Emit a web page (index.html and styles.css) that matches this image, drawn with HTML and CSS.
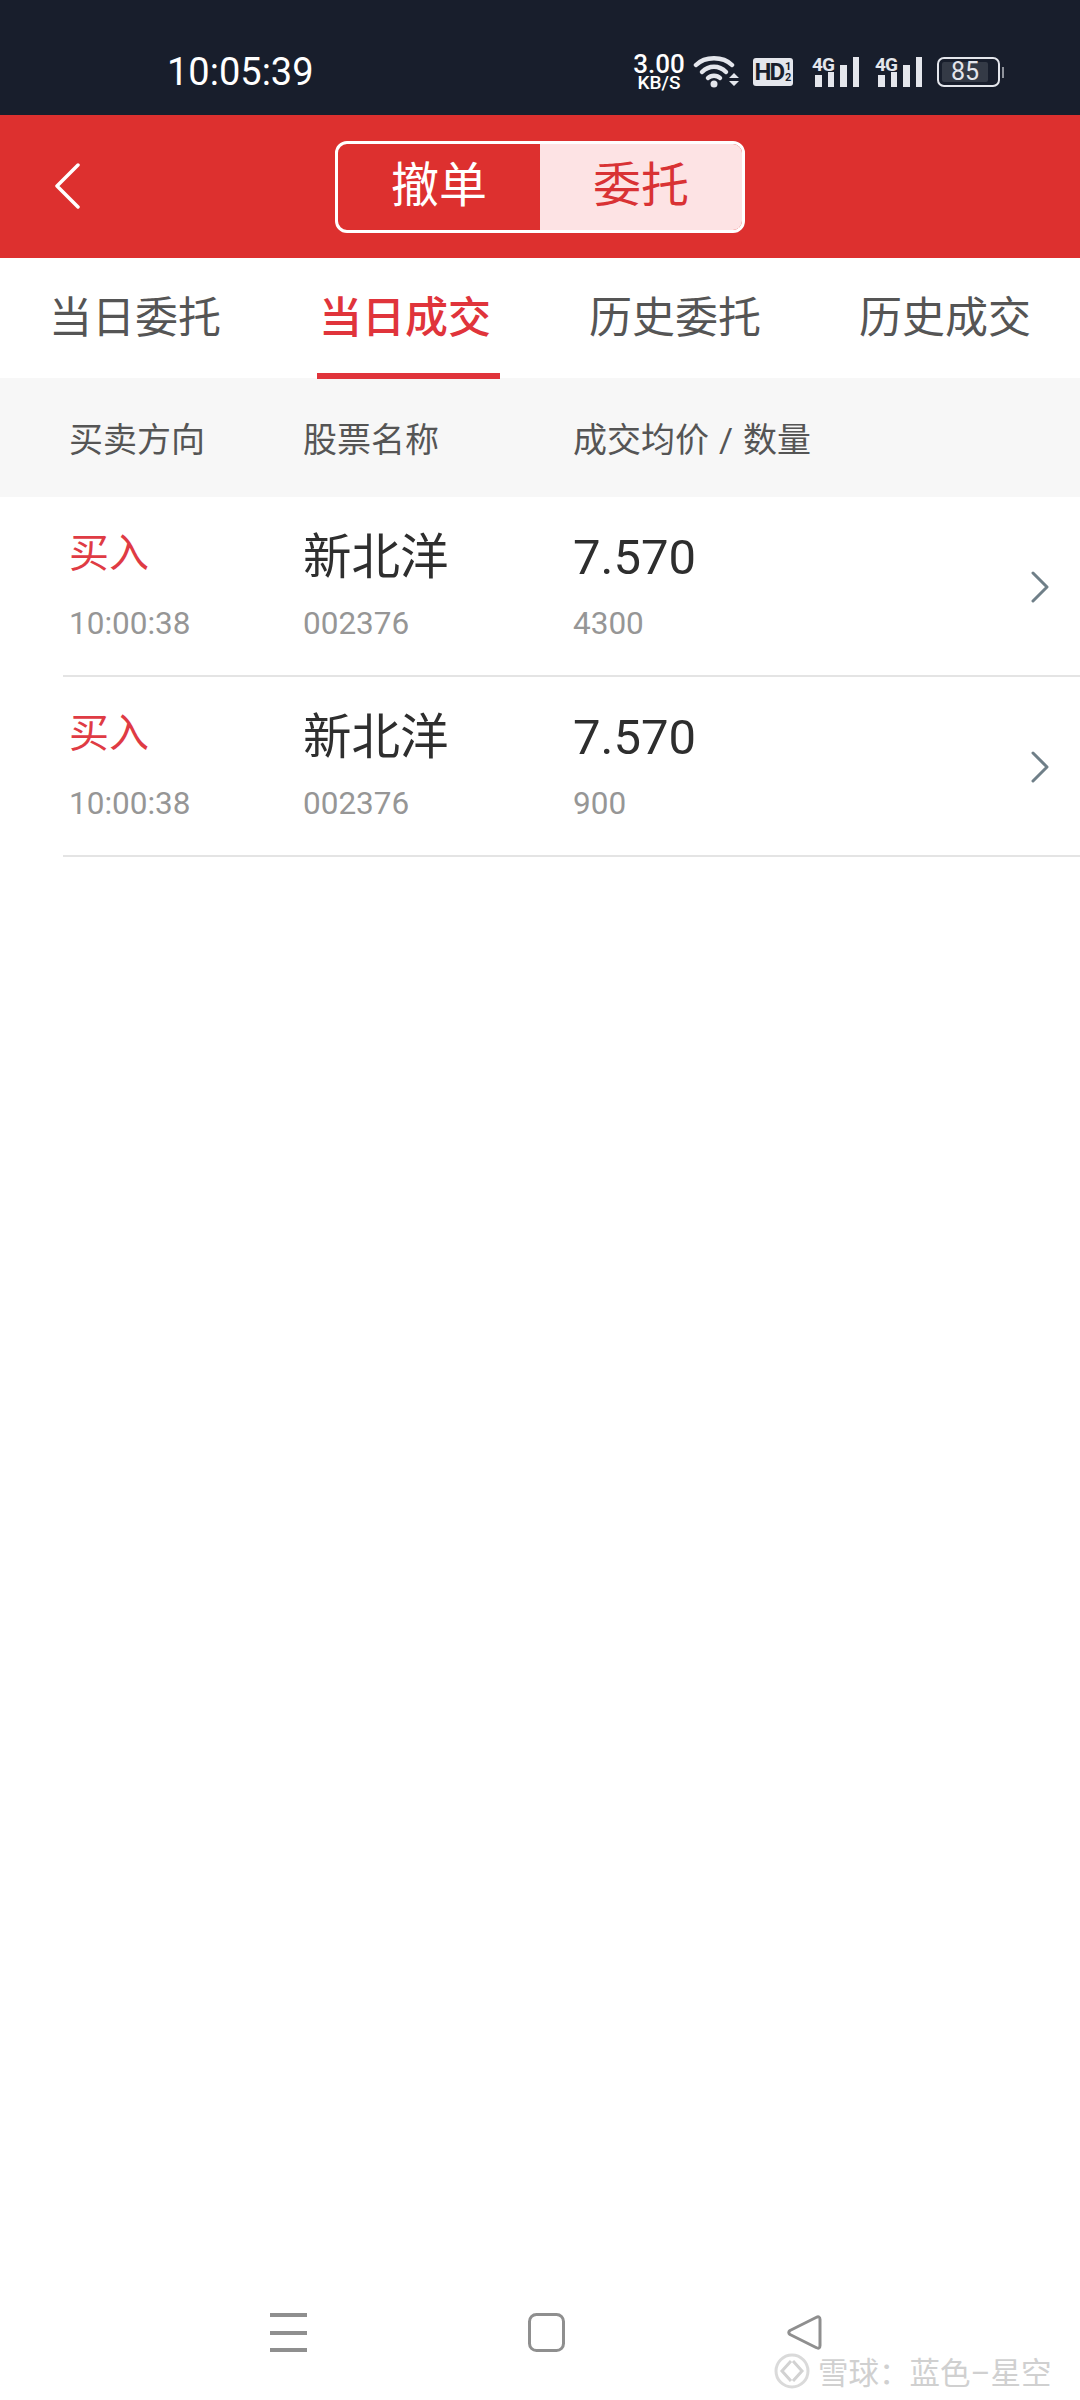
FILE: index.html
```html
<!DOCTYPE html>
<html lang="zh-CN">

<head>
    <meta charset="UTF-8">
    <meta name="viewport" content="width=device-width, initial-scale=1.0">
    <title>当日成交</title>
    <link rel="stylesheet" href="styles.css">
</head>

<body>
    <div class="page">
        <div class="status-bar">
            <span class="clock">10:05:39</span>
            <div class="status-icons">
                <div class="speed"><b>3.00</b><small>KB/S</small></div>
                <svg class="wifi" width="46" height="34" viewBox="0 0 46 34" fill="none" stroke="#e4e6ec" stroke-width="4.500" stroke-linecap="round">
                    <path d="M3 10C12 1 30 1 39 10"/>
                    <path d="M9 17C16 10 26 10 33 17"/>
                    <path d="M15 23C18 20 24 20 27 23"/>
                    <circle cx="21" cy="29" r="3.500" fill="#e4e6ec" stroke="none"/>
                    <path d="M36 23h10l-5-5zM36 26h10l-5 5z" fill="#e4e6ec" stroke="none"/>
                </svg>
                <div class="hd"><span class="hd-main">HD</span><span class="hd-sub">1<br>2</span></div>
                <div class="signal">
                    <span class="net">4G</span>
                    <div class="bars"><i class="b1"></i><i class="b2"></i><i class="b3"></i><i class="b4"></i></div>
                </div>
                <div class="signal">
                    <span class="net">4G</span>
                    <div class="bars"><i class="b1"></i><i class="b2"></i><i class="b3"></i><i class="b4"></i></div>
                </div>
                <div class="battery"><div class="battery-body"><span>85</span></div><i class="battery-tip"></i></div>
            </div>
        </div>

        <div class="title-bar">
            <svg class="back" width="26" height="46" viewBox="0 0 26 46" fill="none" stroke="#fff" stroke-width="3.500" stroke-linecap="round" stroke-linejoin="round">
                <path d="M24 2L3 23L24 44"/>
            </svg>
            <div class="switch">
                <div class="switch-item">撤单</div>
                <div class="switch-item active">委托</div>
            </div>
        </div>

        <div class="tabs">
            <div class="tab">当日委托</div>
            <div class="tab active">当日成交</div>
            <div class="tab">历史委托</div>
            <div class="tab">历史成交</div>
        </div>

        <div class="table-head">
            <span class="col-a">买卖方向</span>
            <span class="col-b">股票名称</span>
            <span class="col-c">成交均价 / 数量</span>
        </div>

        <div class="row">
            <div class="col-a">
                <div class="side">买入</div>
                <div class="sub">10:00:38</div>
            </div>
            <div class="col-b">
                <div class="name">新北洋</div>
                <div class="sub">002376</div>
            </div>
            <div class="col-c">
                <div class="price">7.570</div>
                <div class="sub">4300</div>
            </div>
            <svg class="arrow" width="18" height="32" viewBox="0 0 18 32" fill="none" stroke="#6f7f88" stroke-width="3" stroke-linecap="round" stroke-linejoin="round">
                <path d="M2 2L16 16L2 30"/>
            </svg>
        </div>

        <div class="row">
            <div class="col-a">
                <div class="side">买入</div>
                <div class="sub">10:00:38</div>
            </div>
            <div class="col-b">
                <div class="name">新北洋</div>
                <div class="sub">002376</div>
            </div>
            <div class="col-c">
                <div class="price">7.570</div>
                <div class="sub">900</div>
            </div>
            <svg class="arrow" width="18" height="32" viewBox="0 0 18 32" fill="none" stroke="#6f7f88" stroke-width="3" stroke-linecap="round" stroke-linejoin="round">
                <path d="M2 2L16 16L2 30"/>
            </svg>
        </div>

        <div class="nav-bar">
            <svg width="37" height="39" viewBox="0 0 37 39" fill="#8f8f8f">
                <rect x="0" y="0" width="37" height="4"/>
                <rect x="0" y="18" width="37" height="4"/>
                <rect x="0" y="35" width="37" height="4"/>
            </svg>
            <svg width="37" height="39" viewBox="0 0 37 39" fill="none" stroke="#8f8f8f" stroke-width="3">
                <rect x="1.500" y="1.500" width="34" height="36" rx="7"/>
            </svg>
            <svg width="37" height="39" viewBox="0 0 37 39" fill="none" stroke="#8f8f8f" stroke-width="3" stroke-linejoin="round">
                <path d="M30 4.500Q34 2.500 34 6.500V32.500Q34 36.500 30 34.500L4 21.500Q1.500 19.500 4 17.500Z"/>
            </svg>
        </div>

        <div class="watermark">
            <svg width="36" height="36" viewBox="0 0 36 36" fill="#fff" stroke-width="3">
                <circle cx="18" cy="18" r="16" stroke="#dadada"/>
                <path d="M17 8L8 18L17 28M19 8L28 18L19 28" fill="none" stroke="#d2d2d2"/>
            </svg>
            <span>雪球：蓝色–星空</span>
        </div>
    </div>
</body>

</html>
```

FILE: styles.css
```css
* {
    box-sizing: border-box;
}

body {
    margin: 0;
    font-family: "Roboto", "Noto Sans CJK SC", sans-serif;
    background-color: #fff;
}

.page {
    position: relative;
    width: 1080px;
    height: 2400px;
    overflow: hidden;
    background-color: #fff;
}

/* status bar */
.status-bar {
    height: 115px;
    background-color: #181e2c;
    color: #fff;
    display: flex;
    align-items: center;
    padding: 0 76px 0 167px;
    justify-content: space-between;
}

.clock {
    font-size: 38px;
    margin-top: 29px;
}

.status-icons {
    display: flex;
    align-items: center;
    margin-top: 29px;
}

.speed {
    width: 52px;
    text-align: center;
    margin-right: 8px;
}

.speed b {
    display: block;
    font-size: 26px;
    line-height: 22px;
    font-weight: 500;
}

.speed small {
    display: block;
    font-size: 19px;
    line-height: 16px;
    font-weight: 500;
}

.wifi {
    margin-right: 14px;
}

.hd {
    width: 40px;
    height: 28px;
    background-color: #e4e6ec;
    border-radius: 3px;
    color: #181e2c;
    display: flex;
    align-items: center;
    justify-content: center;
    font-weight: 700;
    margin-right: 19px;
}

.hd-main {
    font-size: 24px;
    letter-spacing: -2px;
}

.hd-sub {
    font-size: 11px;
    line-height: 11px;
    text-align: center;
    margin-left: 2px;
}

.signal {
    position: relative;
    width: 47px;
    height: 30px;
    margin-right: 16px;
}

.signal + .battery {
    margin-left: -1px;
}

.net {
    position: absolute;
    left: 0;
    top: -2px;
    font-size: 19px;
    font-weight: 700;
    line-height: 20px;
    letter-spacing: -1px;
    color: #e4e6ec;
}

.bars {
    display: flex;
    align-items: flex-end;
    justify-content: flex-end;
    gap: 6px;
    height: 100%;
    padding-left: 3px;
}

.bars i {
    display: block;
    width: 7px;
    background-color: #e4e6ec;
}

.b1 {
    height: 12px;
}

.b2 {
    height: 15px;
}

.b3 {
    height: 22px;
}

.b4 {
    height: 30px;
}

.battery {
    display: flex;
    align-items: center;
    gap: 2px;
}

.battery-body {
    width: 63px;
    height: 30px;
    border: 2px solid #e4e6ec;
    border-radius: 7px;
    padding: 3px;
    font-size: 25px;
    color: #e4e6ec;
}

.battery-body span {
    display: block;
    width: 46px;
    height: 20px;
    line-height: 20px;
    text-align: center;
    background-color: #343a46;
    border-radius: 2px;
}

.battery-tip {
    display: block;
    width: 2px;
    height: 11px;
    background-color: #8f939c;
}

/* red title bar */
.title-bar {
    height: 143px;
    background-color: #dd302f;
    display: flex;
    align-items: center;
    justify-content: center;
    position: relative;
}

.back {
    position: absolute;
    left: 54px;
    top: 48px;
}

.switch {
    width: 410px;
    height: 92px;
    border: 3px solid #fff;
    border-radius: 12px;
    display: flex;
    overflow: hidden;
}

.switch-item {
    flex: 1;
    text-align: center;
    font-size: 48px;
    line-height: 84px;
    color: #fff;
}

.switch-item.active {
    background-color: #fde3e4;
    color: #d93234;
}

/* tabs */
.tabs {
    height: 120px;
    display: flex;
}

.tab {
    width: 270px;
    height: 120px;
    text-align: center;
    font-size: 43px;
    line-height: 121px;
    color: #555;
}

.tab.active {
    color: #e0343b;
    font-weight: 500;
    position: relative;
}

.tab.active::after {
    content: "";
    position: absolute;
    left: 47px;
    width: 183px;
    bottom: -1px;
    height: 6px;
    background-color: #e0343b;
}

/* table */
.table-head {
    height: 119px;
    background-color: #f7f7f7;
    display: flex;
    align-items: center;
    font-size: 34px;
    color: #555;
    padding-left: 69px;
    word-spacing: 1.500px;
}

.col-a {
    width: 234px;
}

.col-b {
    width: 270px;
}

.row {
    height: 180px;
    margin-left: 63px;
    padding-left: 6px;
    padding-top: 29px;
    border-bottom: 2px solid #e4e4e4;
    display: flex;
    position: relative;
}

.row:first-of-type {
    height: 178px;
}

.side {
    font-size: 40px;
    line-height: 56px;
    color: #df3b44;
}

.name {
    font-size: 48.500px;
    line-height: 64px;
    color: #2e2e2e;
}

.price {
    font-size: 49px;
    line-height: 64px;
    color: #2e2e2e;
}

.side + .sub {
    margin-top: 22px;
}

.sub {
    font-size: 31.500px;
    line-height: 40px;
    margin-top: 14px;
    color: #969696;
}

.arrow {
    position: absolute;
    right: 31px;
    top: 74px;
}

/* bottom navigation */
.nav-bar {
    position: absolute;
    left: 270px;
    top: 2313px;
    width: 553px;
    display: flex;
    justify-content: space-between;
}

.watermark {
    position: absolute;
    left: 774px;
    top: 2349px;
    display: flex;
    align-items: center;
    gap: 8px;
    font-size: 30.500px;
    color: #d0d0d0;
    white-space: nowrap;
}
```
